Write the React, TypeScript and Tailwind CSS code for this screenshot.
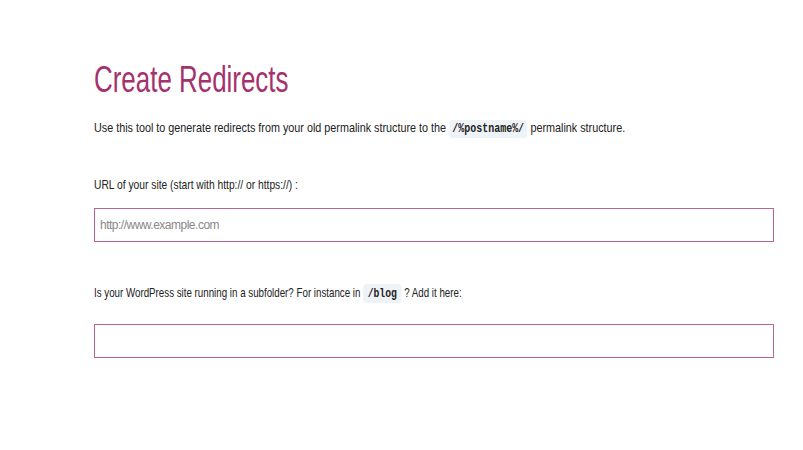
export default function App() {
  return (
    <main className="min-h-screen bg-white pl-[94px] pr-[30px] pt-[60px] font-['Liberation_Sans',Arial,sans-serif] text-[#222]">
      {/* narrow-set type, squeezed horizontally like the original theme */}
      <h1 className="origin-left scale-x-[0.72] text-[36px] leading-[40px] text-[#a3326e]">Create Redirects</h1>

      <p className="mt-[18px] origin-left scale-x-[0.83] whitespace-nowrap text-[13px] leading-[20px]">
        Use this tool to generate redirects from your old permalink structure to the{" "}
        <code className="rounded-sm bg-[#eef3f7] px-[4px] py-[2px] font-['Liberation_Mono',monospace] text-[12px] font-bold">
          /%postname%/
        </code>{" "}
        permalink structure.
      </p>

      <label className="mt-[36px] block origin-left scale-x-[0.79] whitespace-nowrap text-[13px] leading-[20px]">
        URL of your site (start with http:// or https://) :
      </label>
      <input
        type="text"
        placeholder="http://www.example.com"
        className="mt-[13px] block h-[34px] w-[680px] border border-[#b8648e] px-[5px] text-[12px] tracking-[-0.5px] outline-none placeholder:text-[#888]"
      />

      <label className="mt-[41px] block origin-left scale-x-[0.75] whitespace-nowrap text-[13px] leading-[20px]">
        Is your WordPress site running in a subfolder? For instance in{" "}
        <code className="rounded-sm bg-[#eef3f7] px-[6px] py-[2px] font-['Liberation_Mono',monospace] text-[13px] font-bold">
          /blog
        </code>{" "}
        ? Add it here:
      </label>
      <input
        type="text"
        className="mt-[20px] block h-[34px] w-[680px] border border-[#b8648e] px-[5px] text-[12px] outline-none"
      />
    </main>
  );
}
